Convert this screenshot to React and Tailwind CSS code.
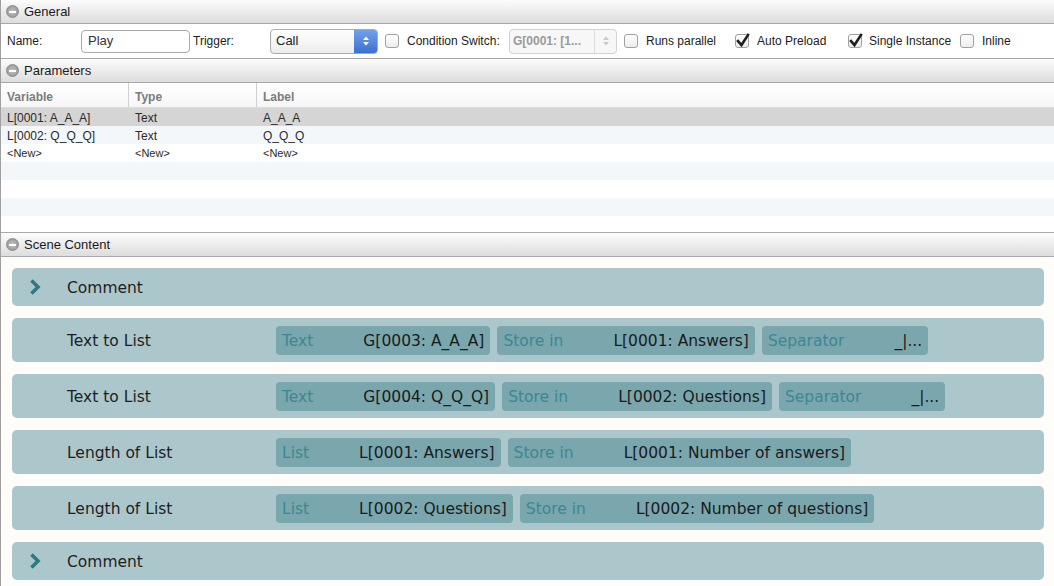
import React from 'react';

const cards = [
  { type: 'comment', title: 'Comment' },
  {
    title: 'Text to List',
    chips: [
      ['Text', 'G[0003: A_A_A]'],
      ['Store in', 'L[0001: Answers]'],
      ['Separator', '_|...'],
    ],
  },
  {
    title: 'Text to List',
    chips: [
      ['Text', 'G[0004: Q_Q_Q]'],
      ['Store in', 'L[0002: Questions]'],
      ['Separator', '_|...'],
    ],
  },
  {
    title: 'Length of List',
    chips: [
      ['List', 'L[0001: Answers]'],
      ['Store in', 'L[0001: Number of answers]'],
    ],
  },
  {
    title: 'Length of List',
    chips: [
      ['List', 'L[0002: Questions]'],
      ['Store in', 'L[0002: Number of questions]'],
    ],
  },
  { type: 'comment', title: 'Comment' },
];

const params = [
  ['L[0001: A_A_A]', 'Text', 'A_A_A'],
  ['L[0002: Q_Q_Q]', 'Text', 'Q_Q_Q'],
];

function MinusIcon() {
  return (
    <div className="ml-[5px] w-[13px] h-[13px] rounded-full bg-radial from-[#c4c4c4] to-[#8e8e8e] border border-[#8a8a8a] flex items-center justify-center">
      <div className="w-[7px] h-[2px] bg-white" />
    </div>
  );
}

function SectionHeader({ title, top }) {
  return (
    <div
      className={`h-[25px] shrink-0 flex items-center bg-linear-to-b from-[#fcfcfc] to-[#dddddd] border-b border-[#a8a8a8] ${
        top ? 'border-t' : ''
      }`}
    >
      <MinusIcon />
      <span className="ml-[5px] text-[13px] text-[#1a1a1a]">{title}</span>
    </div>
  );
}

function Checkbox({ checked }) {
  return (
    <div className="w-[14px] h-[14px] rounded-[3px] border border-[#a0a0a0] bg-linear-to-b from-white to-[#ececec] relative shrink-0">
      {checked && (
        <svg className="absolute left-[0px] top-[-2px]" width="14" height="15" viewBox="0 0 14 15">
          <path d="M2 8 L5.5 12 L12 2" fill="none" stroke="#1e1e1e" strokeWidth="2.6" strokeLinecap="square" />
        </svg>
      )}
    </div>
  );
}

function Arrows({ color }) {
  return (
    <svg width="8" height="12" viewBox="0 0 8 12">
      <path d="M1 5 L4 1.5 L7 5 Z" fill={color} />
      <path d="M1 7 L4 10.5 L7 7 Z" fill={color} />
    </svg>
  );
}

function Chevron() {
  return (
    <svg width="14" height="18" viewBox="0 0 14 18">
      <path d="M3.5 2.5 L10 9 L3.5 15.5" fill="none" stroke="#2f7884" strokeWidth="3.6" strokeLinejoin="miter" />
    </svg>
  );
}

function Card({ card }) {
  if (card.type === 'comment') {
    return (
      <div className="h-[38px] shrink-0 rounded-[5px] bg-[#acc7cb] flex items-center">
        <div className="ml-[16px] w-[39px] flex items-center">
          <Chevron />
        </div>
        <span className="text-[#1e1e1e] pt-[3px]">{card.title}</span>
      </div>
    );
  }
  return (
    <div className="h-[44px] shrink-0 rounded-[5px] bg-[#acc7cb] flex items-center pt-[1px]">
      <div className="w-[264px] pl-[55px] pt-[2px] text-[#1e1e1e] shrink-0">{card.title}</div>
      <div className="flex gap-[7px]">
        {card.chips.map(([label, value], i) => (
          <div key={i} className="h-[29px] rounded-[4px] bg-[#7aa6ad] flex items-center px-[6px] pt-[2px]">
            <span className="text-[#3b8893] mr-[50px]">{label}</span>
            <span className="text-[#1a1a1a]">{value}</span>
          </div>
        ))}
      </div>
    </div>
  );
}

export default function App() {
  return (
    <div className="w-[1054px] h-[586px] overflow-hidden border-l border-[#a0a0a0] bg-white font-['Liberation_Sans',Arial,sans-serif] flex flex-col">
      <div className="h-[24px] shrink-0 flex items-center bg-linear-to-b from-[#fcfcfc] to-[#dddddd] border-b border-[#a8a8a8]">
        <MinusIcon />
        <span className="ml-[5px] text-[13px] text-[#1a1a1a]">General</span>
      </div>

      <div className="h-[34px] shrink-0 flex items-center text-[12px] text-[#222]">
        <span className="ml-[6px] w-[74px]">Name:</span>
        <div className="w-[109px] h-[23px] rounded-[4px] border border-[#a9a9a9] flex items-center px-[6px] text-[13px] text-[#333]">
          Play
        </div>
        <span className="ml-[3px] w-[77px]">Trigger:</span>
        <div className="w-[108px] h-[25px] rounded-[4px] border border-[#aaaaaa] bg-linear-to-b from-white to-[#ececec] flex overflow-hidden">
          <span className="flex-1 flex items-center pl-[5px] text-[13px] text-[#222]">Call</span>
          <div className="w-[23px] bg-linear-to-b from-[#74a0ea] to-[#3d6fd3] flex items-center justify-center">
            <Arrows color="#ffffff" />
          </div>
        </div>
        <div className="ml-[7px]">
          <Checkbox />
        </div>
        <span className="ml-[8px] w-[102px]">Condition Switch:</span>
        <div className="w-[108px] h-[25px] rounded-[4px] border border-[#d2d2d2] bg-[#f7f7f7] flex overflow-hidden">
          <span className="flex-1 flex items-center pl-[3px] text-[12px] font-bold text-[#9a9a9a]">G[0001: [1...</span>
          <div className="w-[22px] border-l border-[#dddddd] flex items-center justify-center">
            <Arrows color="#c8c8c8" />
          </div>
        </div>
        <div className="ml-[7px]">
          <Checkbox />
        </div>
        <span className="ml-[8px] w-[89px]">Runs parallel</span>
        <Checkbox checked />
        <span className="ml-[8px] w-[91px]">Auto Preload</span>
        <Checkbox checked />
        <span className="ml-[7px] w-[91px]">Single Instance</span>
        <Checkbox />
        <span className="ml-[8px]">Inline</span>
      </div>

      <SectionHeader title="Parameters" top />

      <div className="h-[149px] shrink-0 overflow-hidden text-[12px]">
        <div className="h-[25px] flex border-b border-[#dcdcdc] bg-linear-to-b from-white to-[#f6f6f6] font-bold text-[#7c7c7c]">
          <div className="w-[128px] border-r border-[#d0d0d0] flex items-center pl-[6px] pt-[3px]">Variable</div>
          <div className="w-[128px] border-r border-[#d0d0d0] flex items-center pl-[6px] pt-[3px]">Type</div>
          <div className="flex-1 flex items-center pl-[6px] pt-[3px]">Label</div>
        </div>
        {params.map((p, i) => (
          <div key={i} className={`h-[18px] flex items-center pt-[1px] text-[#2a2a2a] ${i === 0 ? 'bg-[#d5d5d5]' : 'bg-[#f4f7fa]'}`}>
            <span className="w-[128px] pl-[6px]">{p[0]}</span>
            <span className="w-[128px] pl-[6px]">{p[1]}</span>
            <span className="pl-[6px]">{p[2]}</span>
          </div>
        ))}
        <div className="h-[18px] flex items-center pt-[1px] text-[11px] text-[#2a2a2a]">
          <span className="w-[128px] pl-[6px]">&lt;New&gt;</span>
          <span className="w-[128px] pl-[6px]">&lt;New&gt;</span>
          <span className="pl-[6px]">&lt;New&gt;</span>
        </div>
        <div className="h-[18px] bg-[#f4f7fa]" />
        <div className="h-[18px]" />
        <div className="h-[18px] bg-[#f4f7fa]" />
        <div className="h-[18px]" />
      </div>

      <SectionHeader title="Scene Content" top />

      <div className="flex-1 bg-[#fefdf9] pt-[11px] pl-[11px] pr-[10px] flex flex-col gap-[12px] font-['DejaVu_Sans',Verdana,sans-serif] text-[15.5px] overflow-hidden">
        {cards.map((c, i) => (
          <Card key={i} card={c} />
        ))}
      </div>
    </div>
  );
}
